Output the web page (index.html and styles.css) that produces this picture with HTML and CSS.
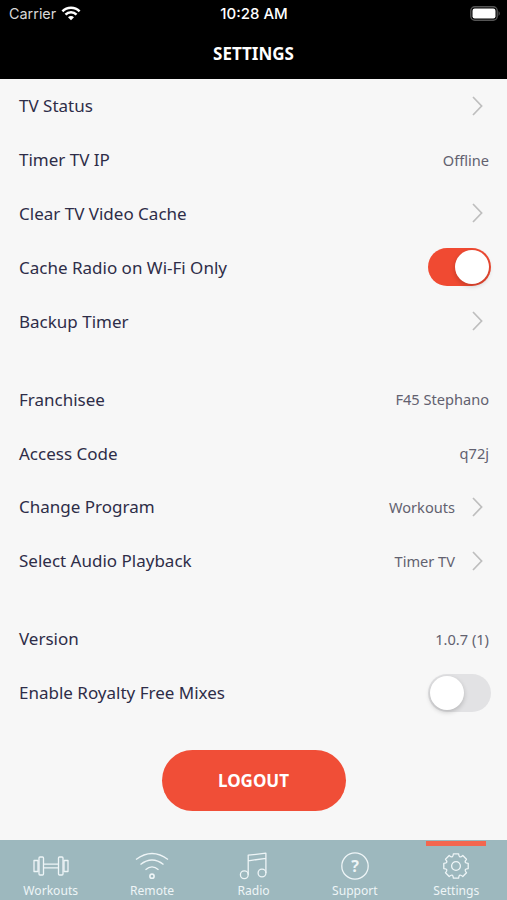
FILE: index.html
```html
<!doctype html>
<html lang="en">
  <head>
    <meta charset="UTF-8" />
    <meta name="viewport" content="width=device-width, initial-scale=1" />
    <title>Settings</title>
    <link rel="stylesheet" href="styles.css">
  </head>
  <body>
    <header class="header">
      <div class="statusbar">
        <div class="carrier">
          <span>Carrier</span>
          <svg width="20" height="15" viewBox="0 0 20 15" fill="none" stroke="#fff" stroke-width="2.5">
            <path d="M1.4 5.4 A12 12 0 0 1 18.6 5.4" />
            <path d="M4.5 8.6 A7.6 7.6 0 0 1 15.5 8.6" />
            <path d="M10 14.2 L7 11.3 A4.2 4.2 0 0 1 13 11.3 Z" fill="#fff" stroke="none" />
          </svg>
        </div>
        <div class="time">10:28 AM</div>
        <svg class="battery" width="31" height="15" viewBox="0 0 31 15">
          <rect x="0.8" y="0.8" width="26.4" height="13.4" rx="4" fill="none" stroke="#555" stroke-width="1.4" />
          <rect x="2.5" y="2.5" width="23" height="10" rx="2.2" fill="#fff" />
          <path d="M28.6 5 Q30.8 7.5 28.6 10 Z" fill="#666" />
        </svg>
      </div>
      <h1>SETTINGS</h1>
    </header>

    <main class="settings">
      <div class="group">
        <div class="row">
          <span class="label">TV Status</span>
          <svg class="chevron" viewBox="0 0 11 20"><path d="M1 1 L9.6 10 L1 19" /></svg>
        </div>
        <div class="row">
          <span class="label">Timer TV IP</span>
          <span class="value">Offline</span>
        </div>
        <div class="row">
          <span class="label">Clear TV Video Cache</span>
          <svg class="chevron" viewBox="0 0 11 20"><path d="M1 1 L9.6 10 L1 19" /></svg>
        </div>
        <div class="row">
          <span class="label">Cache Radio on Wi-Fi Only</span>
          <span class="switch on"><span class="knob"></span></span>
        </div>
        <div class="row">
          <span class="label">Backup Timer</span>
          <svg class="chevron" viewBox="0 0 11 20"><path d="M1 1 L9.6 10 L1 19" /></svg>
        </div>
      </div>

      <div class="group">
        <div class="row">
          <span class="label">Franchisee</span>
          <span class="value">F45 Stephano</span>
        </div>
        <div class="row">
          <span class="label">Access Code</span>
          <span class="value">q72j</span>
        </div>
        <div class="row">
          <span class="label">Change Program</span>
          <span class="value">Workouts</span>
          <svg class="chevron" viewBox="0 0 11 20"><path d="M1 1 L9.6 10 L1 19" /></svg>
        </div>
        <div class="row">
          <span class="label">Select Audio Playback</span>
          <span class="value">Timer TV</span>
          <svg class="chevron" viewBox="0 0 11 20"><path d="M1 1 L9.6 10 L1 19" /></svg>
        </div>
      </div>

      <div class="group">
        <div class="row">
          <span class="label">Version</span>
          <span class="value">1.0.7 (1)</span>
        </div>
        <div class="row">
          <span class="label">Enable Royalty Free Mixes</span>
          <span class="switch"><span class="knob"></span></span>
        </div>
      </div>

      <button class="logout">LOGOUT</button>
    </main>

    <nav class="tabbar">
      <a class="tab">
        <svg width="36" height="30" viewBox="0 0 36 30">
          <rect x="1" y="9.5" width="4" height="11" />
          <rect x="6" y="6" width="4.5" height="18" rx="1" />
          <path d="M10.5 13.2 H25.5 M10.5 16.8 H25.5" />
          <rect x="25.5" y="6" width="4.5" height="18" rx="1" />
          <rect x="31" y="9.5" width="4" height="11" />
        </svg>
        <span>Workouts</span>
      </a>
      <a class="tab">
        <svg width="36" height="30" viewBox="0 0 36 30">
          <path d="M2 8.5 Q18 -3.5 34 8.5" />
          <path d="M6.5 13.5 Q18 4.5 29.5 13.5" />
          <path d="M11.5 18.7 Q18 13 24.5 18.7" />
          <circle cx="18" cy="25.2" r="2.1" stroke-width="1.6" />
        </svg>
        <span>Remote</span>
      </a>
      <a class="tab">
        <svg width="36" height="30" viewBox="0 0 36 30">
          <circle cx="9.3" cy="23.8" r="3.9" />
          <circle cx="27" cy="22" r="3.9" />
          <path d="M13.2 23.8 V4.2 L30.9 2.2 V22 M13.2 9.8 L30.9 7.3" />
        </svg>
        <span>Radio</span>
      </a>
      <a class="tab">
        <svg width="36" height="30" viewBox="0 0 36 30">
          <circle cx="18" cy="15" r="13.2" />
          <text x="18" y="20.8" text-anchor="middle">?</text>
        </svg>
        <span>Support</span>
      </a>
      <a class="tab active">
        <svg width="36" height="30" viewBox="-18 -15 36 30">
          <path d="M-2.6 -12.2 L2.6 -12.2 Q2.95 -7.1 6.8 -10.5 L10.5 -6.8 Q7.1 -2.95 12.2 -2.6 L12.2 2.6 Q7.1 2.95 10.5 6.8 L6.8 10.5 Q2.95 7.1 2.6 12.2 L-2.6 12.2 Q-2.95 7.1 -6.8 10.5 L-10.5 6.8 Q-7.1 2.95 -12.2 2.6 L-12.2 -2.6 Q-7.1 -2.95 -10.5 -6.8 L-6.8 -10.5 Q-2.95 -7.1 -2.6 -12.2 Z" />
          <circle cx="0" cy="0" r="4.4" />
        </svg>
        <span>Settings</span>
      </a>
    </nav>
  </body>
</html>
```
FILE: styles.css
```css
* {
  box-sizing: border-box;
}

body {
  margin: 0;
  height: 100vh;
  display: flex;
  flex-direction: column;
  overflow: hidden;
  font-family: "Noto Sans", sans-serif;
  background-color: #f7f7f7;
  color: #2e2d48;
}

.header {
  height: 79px;
  flex-shrink: 0;
  background-color: #000;
  color: #fff;
}

.statusbar {
  height: 27px;
  padding: 0 6px 0 9px;
  display: grid;
  grid-template-columns: 1fr auto 1fr;
  align-items: center;
  font-family: Inter, sans-serif;
  font-size: 15px;
}

.carrier {
  display: flex;
  align-items: center;
  gap: 5px;
  font-size: 14.4px;
  color: #d8d8d8;
}

.time {
  margin-right: 2px;
  font-weight: 500;
}

.battery {
  justify-self: end;
}

.header h1 {
  margin: 0;
  font-size: 17px;
  line-height: 53px;
  font-weight: 700;
  text-align: center;
}

.settings {
  flex: 1;
  display: flex;
  flex-direction: column;
  gap: 24.4px;
}

.row {
  height: 53.8px;
  padding: 0 18px 0 19px;
  display: flex;
  align-items: center;
}

.label {
  flex: 1;
  font-size: 17px;
}

.value {
  font-size: 14.6px;
  color: #62616f;
}

.chevron {
  width: 11px;
  height: 20px;
  margin: 0 6px 0 17px;
  fill: none;
  stroke: #bebebe;
  stroke-width: 1.7;
}

.switch {
  display: flex;
  width: 63px;
  height: 38px;
  padding: 2px;
  margin-right: -2px;
  border-radius: 19px;
  background-color: #e2e2e4;
}

.switch.on {
  justify-content: flex-end;
  background-color: #f04a32;
}

.knob {
  width: 34px;
  height: 34px;
  border-radius: 50%;
  background-color: #fff;
  box-shadow: 0 2px 5px rgba(0, 0, 0, 0.2);
}

.logout {
  width: 184px;
  height: 61px;
  margin: 6px auto 0;
  padding: 0;
  border: none;
  border-radius: 31px;
  background-color: #f04e37;
  color: #fff;
  font-family: inherit;
  font-size: 17px;
  font-weight: 700;
}

.tabbar {
  height: 60px;
  flex-shrink: 0;
  display: grid;
  grid-template-columns: repeat(5, 1fr);
  background-color: #9db8be;
}

.tab {
  position: relative;
  padding-top: 11px;
  display: flex;
  flex-direction: column;
  align-items: center;
  font-size: 12.1px;
  line-height: 20px;
  color: #eef5f7;
}

.tab svg {
  fill: none;
  stroke: #eef5f7;
  stroke-width: 1.3;
  stroke-linejoin: round;
}

.tab text {
  fill: #eef5f7;
  stroke: none;
  font-size: 16px;
  font-weight: 700;
}

/* red marker over the current tab */
.tab.active::before {
  content: "";
  position: absolute;
  top: 1px;
  width: 60px;
  height: 5px;
  background-color: #f4664f;
}
```
